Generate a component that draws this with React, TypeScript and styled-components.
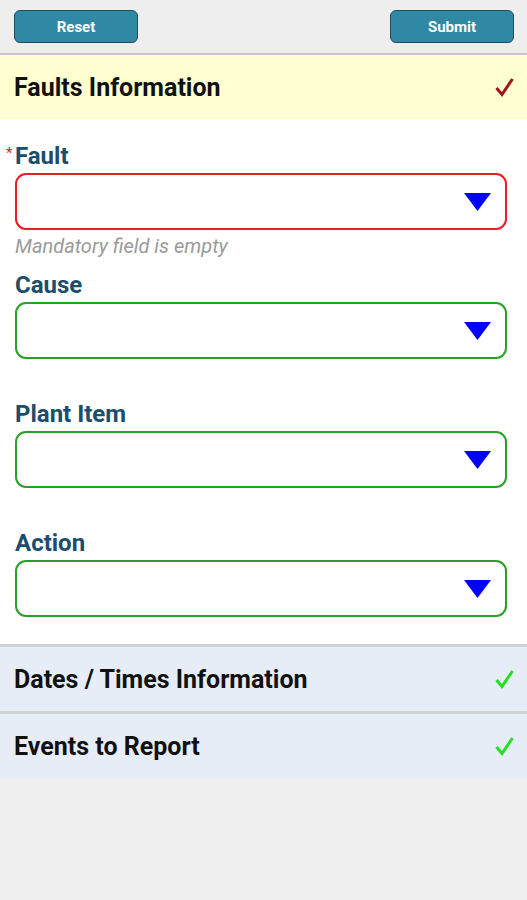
import React from 'react';
import styled, { createGlobalStyle } from 'styled-components';

const GlobalStyle = createGlobalStyle`
  html, body {
    margin: 0;
    padding: 0;
    background: #efefef;
    font-family: Roboto, "Liberation Sans", Arial, sans-serif;
  }
`;

const Page = styled.div`
  width: 527px;
  min-height: 900px;
  background: #efefef;
`;

const Toolbar = styled.div`
  height: 55px;
  display: flex;
  justify-content: space-between;
  align-items: flex-start;
  padding: 10px 13px 0 14px;
  box-sizing: border-box;
  background: #eeeeee;
  border-bottom: 2px solid #c9c9c9;
`;

const ToolButton = styled.button`
  width: 124px;
  height: 33px;
  background: #2f89a4;
  border: 1.5px solid #1d4e5e;
  border-radius: 6px;
  color: #ffffff;
  font-family: Roboto, "Liberation Sans", Arial, sans-serif;
  font-size: 15px;
  font-weight: 700;
  padding: 0;
`;

const SectionHeader = styled.div<{ $active?: boolean }>`
  height: 64px;
  display: flex;
  align-items: center;
  justify-content: space-between;
  padding: 0 13px 0 14px;
  background: ${({ $active }) => ($active ? '#ffffd2' : '#e7edf7')};
  border-top: ${({ $active }) => ($active ? 'none' : '3px solid #cfd3d8')};
`;

const SectionTitle = styled.span`
  font-size: 25px;
  font-weight: 700;
  color: #111111;
`;

const Form = styled.div`
  background: #ffffff;
  padding: 23px 20px 27px 15px;
  display: flex;
  flex-direction: column;
`;

const Field = styled.div`
  display: flex;
  flex-direction: column;
  height: 129px;
  &:last-child {
    height: auto;
  }
`;

const Label = styled.label`
  position: relative;
  font-size: 24px;
  font-weight: 700;
  color: #1c4d6b;
  line-height: 28px;
  margin-bottom: 3px;
`;

const Required = styled.span`
  position: absolute;
  left: -9px;
  top: -3px;
  font-size: 15px;
  font-weight: 400;
  color: #e8202a;
`;

const Select = styled.div<{ $error?: boolean }>`
  height: 57px;
  box-sizing: border-box;
  border: 2px solid ${({ $error }) => ($error ? '#ec1c24' : '#2aa02a')};
  border-radius: 11px;
  display: flex;
  align-items: center;
  justify-content: flex-end;
  padding-right: 14px;
  background: #ffffff;
`;

const Hint = styled.div`
  margin-top: 4px;
  font-size: 20px;
  font-style: italic;
  color: #9a9a9a;
  line-height: 24px;
`;

const Arrow = () => (
  <svg width="27" height="20" viewBox="0 0 27 20">
    <polygon points="0,1 27,1 13.5,19" fill="#0000ff" />
  </svg>
);

const Check = ({ color }: { color: string }) => (
  <svg width="19" height="20" viewBox="0 0 19 20">
    <path d="M1.5 11 L7 17.5 L17.5 2" fill="none" stroke={color} strokeWidth="3" strokeLinejoin="miter" />
  </svg>
);

const fields = [
  { label: 'Fault', required: true, error: true },
  { label: 'Cause' },
  { label: 'Plant Item' },
  { label: 'Action' },
];

const App: React.FC = () => (
  <Page>
    <GlobalStyle />
    <Toolbar>
      <ToolButton>Reset</ToolButton>
      <ToolButton>Submit</ToolButton>
    </Toolbar>
    <SectionHeader $active>
      <SectionTitle>Faults Information</SectionTitle>
      <Check color="#a0151c" />
    </SectionHeader>
    <Form>
      {fields.map((f) => (
        <Field key={f.label}>
          <Label>
            {f.required && <Required>*</Required>}
            {f.label}
          </Label>
          <Select $error={f.error}>
            <Arrow />
          </Select>
          {f.error && <Hint>Mandatory field is empty</Hint>}
        </Field>
      ))}
    </Form>
    <SectionHeader>
      <SectionTitle>Dates / Times Information</SectionTitle>
      <Check color="#22e022" />
    </SectionHeader>
    <SectionHeader>
      <SectionTitle>Events to Report</SectionTitle>
      <Check color="#22e022" />
    </SectionHeader>
  </Page>
);

export default App;
